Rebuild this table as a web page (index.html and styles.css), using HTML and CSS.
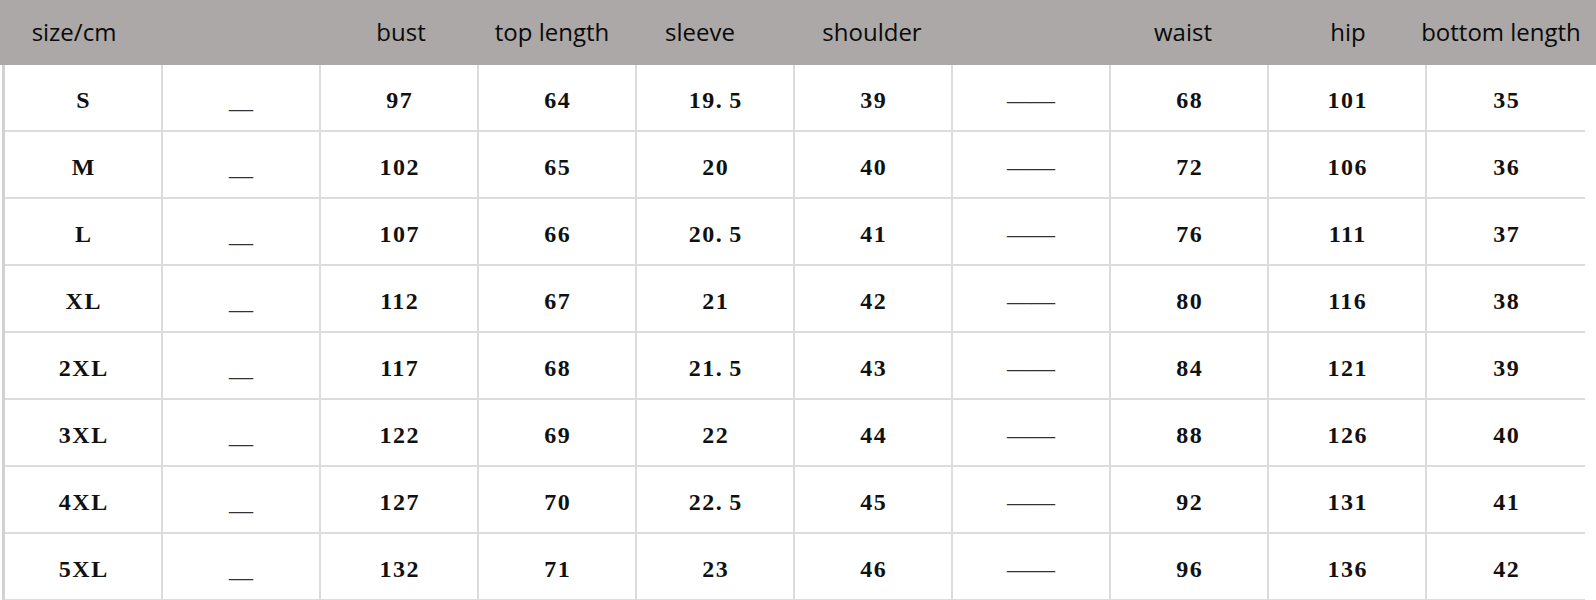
FILE: index.html
```html
<!DOCTYPE html>
<html>
<head>
<meta charset="utf-8">
<link rel="stylesheet" href="styles.css">
</head>
<body>
<div class="page">
  <div class="head">
    <div class="hc h0">size/cm</div>
    <div class="hc"></div>
    <div class="hc h2">bust</div>
    <div class="hc h3">top length</div>
    <div class="hc h4">sleeve</div>
    <div class="hc h5">shoulder</div>
    <div class="hc"></div>
    <div class="hc h7">waist</div>
    <div class="hc">hip</div>
    <div class="hc h9">bottom length</div>
  </div>
  <div class="table">
    <div class="c">S</div><div class="c u">__</div><div class="c">97</div><div class="c">64</div><div class="c">19<span class="dot">.</span>5</div><div class="c">39</div><div class="c d">——</div><div class="c">68</div><div class="c">101</div><div class="c last">35</div>
    <div class="c">M</div><div class="c u">__</div><div class="c">102</div><div class="c">65</div><div class="c">20</div><div class="c">40</div><div class="c d">——</div><div class="c">72</div><div class="c">106</div><div class="c last">36</div>
    <div class="c">L</div><div class="c u">__</div><div class="c">107</div><div class="c">66</div><div class="c">20<span class="dot">.</span>5</div><div class="c">41</div><div class="c d">——</div><div class="c">76</div><div class="c">111</div><div class="c last">37</div>
    <div class="c">XL</div><div class="c u">__</div><div class="c">112</div><div class="c">67</div><div class="c">21</div><div class="c">42</div><div class="c d">——</div><div class="c">80</div><div class="c">116</div><div class="c last">38</div>
    <div class="c">2XL</div><div class="c u">__</div><div class="c">117</div><div class="c">68</div><div class="c">21<span class="dot">.</span>5</div><div class="c">43</div><div class="c d">——</div><div class="c">84</div><div class="c">121</div><div class="c last">39</div>
    <div class="c">3XL</div><div class="c u">__</div><div class="c">122</div><div class="c">69</div><div class="c">22</div><div class="c">44</div><div class="c d">——</div><div class="c">88</div><div class="c">126</div><div class="c last">40</div>
    <div class="c">4XL</div><div class="c u">__</div><div class="c">127</div><div class="c">70</div><div class="c">22<span class="dot">.</span>5</div><div class="c">45</div><div class="c d">——</div><div class="c">92</div><div class="c">131</div><div class="c last">41</div>
    <div class="c">5XL</div><div class="c u">__</div><div class="c">132</div><div class="c">71</div><div class="c">23</div><div class="c">46</div><div class="c d">——</div><div class="c">96</div><div class="c">136</div><div class="c last">42</div>
  </div>
</div>
</body>
</html>
```

FILE: styles.css
```css
html, body {
  margin: 0;
  padding: 0;
  background: #ffffff;
}

.page {
  width: 1596px;
  overflow: hidden;
}

.head {
  display: grid;
  grid-template-columns: repeat(10, 158px);
  height: 65px;
  padding-left: 5px;
  background: #aca8a7;
  font-family: "Open Sans", "Noto Sans", sans-serif;
  font-size: 24px;
  color: #0a0a0a;
  white-space: nowrap;
}

.hc {
  display: flex;
  align-items: center;
  justify-content: center;
  padding-bottom: 3px;
}

.h0 { padding-right: 20px; }
.h2 { padding-left: 2px; }
.h3 { padding-right: 12px; }
.h4 { padding-right: 32px; }
.h5 { padding-right: 4px; }
.h7 { padding-right: 14px; }
.h9 { padding-right: 10px; }

.table {
  display: grid;
  grid-template-columns: repeat(10, 158px);
  grid-auto-rows: 67px;
  margin-left: 2px;
  border-left: 3px solid #d2d2d2;
  width: 1580px;
  font-family: "Liberation Serif", "DejaVu Serif", serif;
  font-weight: bold;
  font-size: 24px;
  letter-spacing: 1.5px;
  color: #111111;
}

.c {
  box-sizing: border-box;
  display: flex;
  align-items: center;
  justify-content: center;
  padding-top: 5px;
  padding-left: 1.5px;
  border-right: 2px solid #dcdcdc;
  border-bottom: 2px solid #dcdcdc;
}

.c.last {
  border-right: none;
}

.c.u, .c.d {
  font-weight: normal;
  letter-spacing: 0;
  padding-left: 0;
  color: #333333;
}

.dot {
  margin-right: 6px;
}
```
